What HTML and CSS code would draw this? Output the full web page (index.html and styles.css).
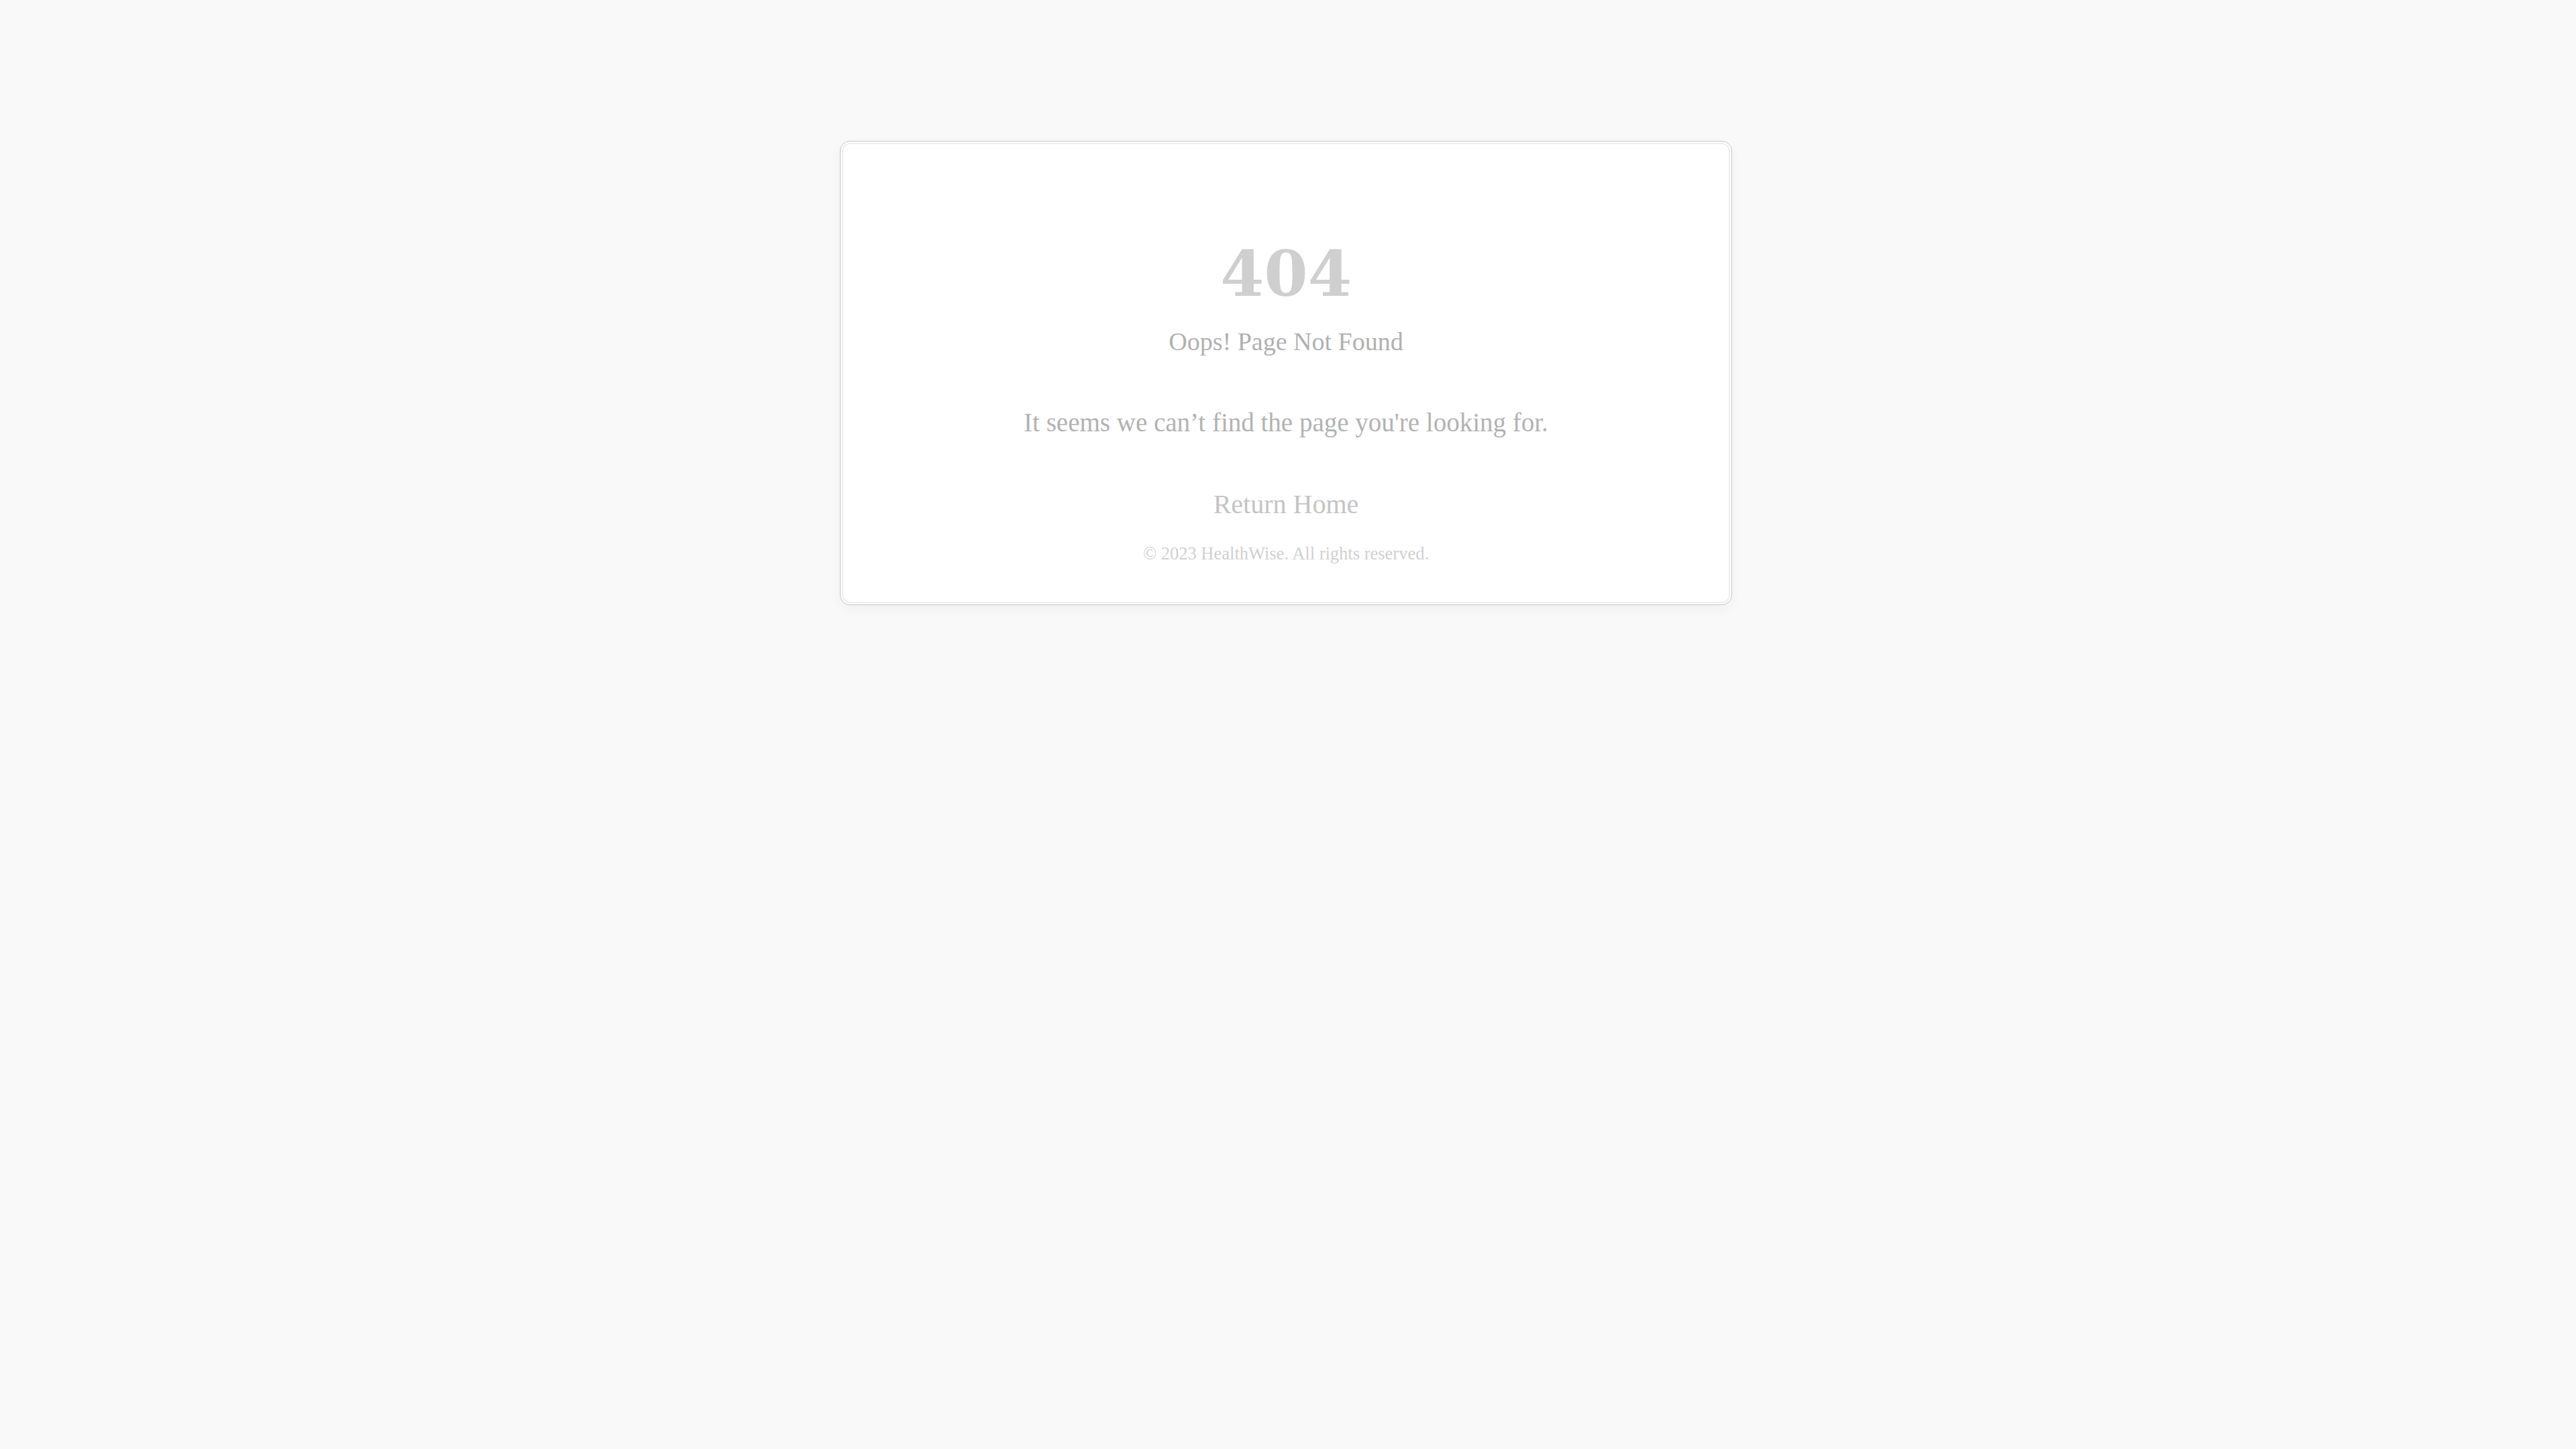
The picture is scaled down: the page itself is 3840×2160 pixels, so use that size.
FILE: index.html
```html
<!DOCTYPE html>
<html lang="en">
<head>
<meta charset="utf-8">
<title>404 - Page Not Found</title>
<link rel="stylesheet" href="styles.css">
</head>
<body>
<main class="card">
  <h1 class="code">404</h1>
  <h2 class="title">Oops! Page Not Found</h2>
  <p class="message">It seems we can’t find the page you're looking for.</p>
  <a class="home-link" href="#">Return Home</a>
  <p class="copyright">© 2023 HealthWise. All rights reserved.</p>
</main>
</body>
</html>
```

FILE: styles.css
```css
html, body {
  margin: 0;
  padding: 0;
}

body {
  background: #f9f9f9;
  font-family: "Liberation Serif", "DejaVu Serif", serif;
  min-height: 2160px;
  padding-right: 6px;
}

.card {
  box-sizing: border-box;
  width: 1330px;
  margin: 210px auto 0;
  padding: 150px 40px 59px;
  background: #ffffff;
  border: 1px solid #c6c6c6;
  border-radius: 15px;
  box-shadow: inset 0 0 0 2px #ffffff, inset 0 0 0 4px #eeeeee, 0 6px 18px rgba(0, 0, 0, 0.045);
  display: flex;
  flex-direction: column;
  align-items: center;
  text-align: center;
}

.code {
  margin: 0;
  font-family: "DejaVu Serif", "Liberation Serif", serif;
  font-weight: bold;
  font-size: 94px;
  line-height: 94px;
  color: #cfcfcf;
  font-variant-numeric: oldstyle-nums;
}

.title {
  margin: 32px 0 0;
  font-weight: normal;
  font-size: 38px;
  line-height: 1.2;
  color: #b0b0b0;
}

.message {
  margin: 74px 0 0;
  font-size: 39px;
  line-height: 1.2;
  color: #b2b2b2;
}

.home-link {
  margin-top: 75px;
  font-size: 40px;
  line-height: 1.2;
  color: #c4c4c4;
  text-decoration: none;
}

.copyright {
  margin: 34px 0 0;
  font-size: 26.5px;
  line-height: 1.2;
  color: #d0d0d0;
  font-variant-numeric: oldstyle-nums;
}
```
